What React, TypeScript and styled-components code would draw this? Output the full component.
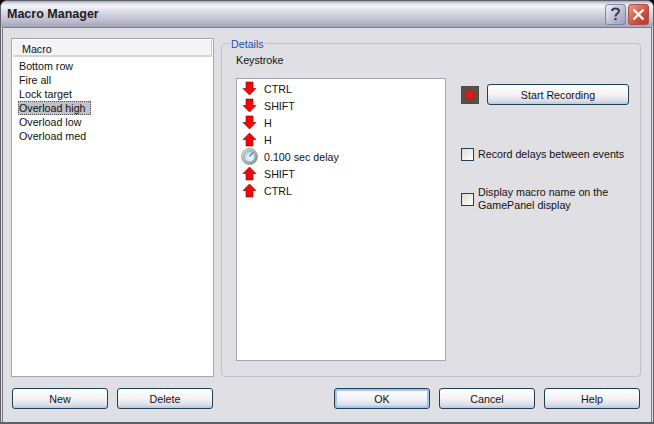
import { FC } from 'react';
import styled, { createGlobalStyle } from 'styled-components';

const GlobalStyle = createGlobalStyle`
  html, body {
    margin: 0;
    padding: 0;
    background: #000;
  }
  body {
    font-family: "Liberation Sans", Arial, sans-serif;
    font-size: 10.7px;
    color: #111;
  }
`;

const Window = styled.div`
  width: 654px;
  height: 424px;
  box-sizing: border-box;
  display: flex;
  flex-direction: column;
  overflow: hidden;
  background: #e0dfe3;
  border-radius: 7px 7px 0 0;
  border: 1px solid #5f5f68;
  border-bottom-width: 2px;
`;

const TitleBar = styled.div`
  height: 26px;
  flex: none;
  display: flex;
  align-items: center;
  padding: 0 4px 0 6px;
  background: linear-gradient(
    #a9a9b8 0,
    #e6e6ee 3px,
    #f4f4f8 5px,
    #d6d6e2 12px,
    #bcbccc 20px,
    #a8a8bc 25px
  );
`;

const Title = styled.div`
  flex: 1;
  font-size: 12.5px;
  font-weight: bold;
  color: #1c1c24;
`;

const CaptionButton = styled.div<{ $close?: boolean }>`
  width: 21px;
  height: 21px;
  margin-left: 2px;
  box-sizing: border-box;
  display: flex;
  align-items: center;
  justify-content: center;
  border: 1px solid ${({ $close }) => ($close ? '#a85050' : '#8088a8')};
  border-radius: 3px;
  background: ${({ $close }) =>
    $close
      ? 'linear-gradient(135deg, #e89a88, #d0503c 60%, #b83828)'
      : 'linear-gradient(135deg, #eef0f8, #b8bcd4 60%, #9ca0c0)'};
`;

const Client = styled.div`
  flex: 1;
  display: flex;
  flex-direction: column;
  margin: 0 1px;
  border: 1px solid #7c7c88;
  border-bottom: none;
  padding: 10px 10px 10px 8px;
`;

const TopRow = styled.div`
  display: flex;
  gap: 7px;
  height: 339px;
`;

const ListPanel = styled.div`
  width: 203px;
  flex: none;
  box-sizing: border-box;
  border: 1px solid #a5a5b0;
  background: #fff;
  padding: 1px;
`;

const ColumnHeader = styled.div`
  height: 17px;
  box-sizing: border-box;
  padding: 3px 0 0 9px;
  margin-bottom: 2px;
  background: #f4f4f4;
  border-right: 1px solid #c4c4cc;
  border-bottom: 2px solid #d4d4dc;
  line-height: 13px;
`;

const MacroItems = styled.div`
  display: flex;
  flex-direction: column;
  align-items: flex-start;
  padding-left: 5px;
`;

const MacroItem = styled.div<{ $selected?: boolean }>`
  height: 14px;
  line-height: 14px;
  padding: 0 ${({ $selected }) => ($selected ? 5 : 1)}px 0 1px;
  box-sizing: border-box;
  background: ${({ $selected }) => ($selected ? '#c0c0c8' : 'transparent')};
  outline: ${({ $selected }) => ($selected ? '1px dotted #555' : 'none')};
  outline-offset: -1px;
`;

const DetailsGroup = styled.div`
  position: relative;
  width: 420px;
  flex: none;
  height: 334px;
  margin-top: 5px;
  box-sizing: border-box;
  border: 1px solid #c0c0c8;
  border-radius: 4px;
  padding: 9px 11px 15px 14px;
  display: flex;
  gap: 15px;
`;

const Legend = styled.div`
  position: absolute;
  top: -6px;
  left: 8px;
  padding: 0 1px;
  background: #e0dfe3;
  color: #2450a8;
  line-height: 13px;
`;

const KeystrokeColumn = styled.div`
  width: 210px;
  flex: none;
  display: flex;
  flex-direction: column;
`;

const FieldLabel = styled.div`
  height: 25px;
  line-height: 14px;
`;

const KeystrokeList = styled.div`
  flex: 1;
  box-sizing: border-box;
  border: 1px solid #a5a5b0;
  background: #fff;
  padding: 1px 0 0 4px;
`;

const KeystrokeRow = styled.div`
  height: 17px;
  display: flex;
  align-items: center;
  gap: 6px;
`;

const IconSlot = styled.div`
  width: 17px;
  height: 17px;
  flex: none;
  display: flex;
  align-items: center;
  justify-content: center;
`;

const SideColumn = styled.div`
  flex: 1;
  display: flex;
  flex-direction: column;
  padding-top: 31px;
`;

const RecordRow = styled.div`
  display: flex;
  align-items: center;
  gap: 8px;
  margin-bottom: 43px;
`;

const RecordLamp = styled.div`
  width: 18px;
  height: 18px;
  background: radial-gradient(circle, #f81410 0, #d81c14 3px, #84382c 5px, #545450 8px);
  border: 1px solid #4a4a48;
  box-sizing: border-box;
`;

const PushButton = styled.button<{ $width?: number; $isDefault?: boolean }>`
  width: ${({ $width }) => $width ?? 96}px;
  height: 21px;
  padding: 0;
  font: inherit;
  color: #111;
  border: 1px solid #1c4058;
  border-radius: 3px;
  background: linear-gradient(#fff 0, #f4f4f8 50%, #dcdce8 85%, #c4c4d8 100%);
  box-shadow: ${({ $isDefault }) =>
    $isDefault ? 'inset 0 0 0 2px #a8c4ec' : 'none'};
`;

const CheckRow = styled.div`
  display: flex;
  align-items: center;
  gap: 4px;
  line-height: 13px;
  margin-bottom: 25px;
`;

const CheckBox = styled.div`
  width: 13px;
  height: 13px;
  flex: none;
  box-sizing: border-box;
  border: 1px solid #1c4058;
  background: linear-gradient(135deg, #dcdcd4, #fff);
`;

const ButtonRow = styled.div`
  display: flex;
  gap: 9px;
  margin-top: 11px;
  padding-left: 1px;
`;

const Spacer = styled.div`
  width: 103px;
`;

const ArrowIcon: FC<{ up?: boolean }> = ({ up }) => (
  <svg width="15" height="15" viewBox="0 0 15 15">
    <path
      d={up ? 'M7.5 1 L14 7.5 L11 7.5 L11 14 L4 14 L4 7.5 L1 7.5 Z' : 'M4 1 L11 1 L11 7.5 L14 7.5 L7.5 14 L1 7.5 L4 7.5 Z'}
      fill="#f00808"
      stroke="#8a0000"
      strokeWidth="0.6"
    />
  </svg>
);

const ClockIcon: FC = () => (
  <svg width="17" height="17" viewBox="0 0 17 17">
    <defs>
      <linearGradient id="clockRing" x1="0" y1="0" x2="1" y2="1">
        <stop offset="0" stopColor="#e8e8e4" />
        <stop offset="1" stopColor="#88887f" />
      </linearGradient>
      <radialGradient id="clockDial" cx="0.6" cy="0.65" r="0.7">
        <stop offset="0" stopColor="#f4fbff" />
        <stop offset="1" stopColor="#a8d0e8" />
      </radialGradient>
    </defs>
    <circle cx="8.5" cy="8.5" r="8" fill="url(#clockRing)" stroke="#808078" strokeWidth="0.6" />
    <circle cx="8.5" cy="8.5" r="5.6" fill="url(#clockDial)" stroke="#6f98b4" strokeWidth="0.7" />
    <path d="M8.5 8.5 L12 4.5" stroke="#3a5a78" strokeWidth="1.1" />
  </svg>
);

const macros = ['Bottom row', 'Fire all', 'Lock target', 'Overload high', 'Overload low', 'Overload med'];

const keystrokes = [
  { kind: 'down', text: 'CTRL' },
  { kind: 'down', text: 'SHIFT' },
  { kind: 'down', text: 'H' },
  { kind: 'up', text: 'H' },
  { kind: 'delay', text: '0.100 sec delay' },
  { kind: 'up', text: 'SHIFT' },
  { kind: 'up', text: 'CTRL' },
];

const App: FC = () => (
  <Window>
    <GlobalStyle />
    <TitleBar>
      <Title>Macro Manager</Title>
      <CaptionButton>
        <svg width="11" height="14" viewBox="0 0 11 14">
          <path d="M2 4 C2 0.5 9 0.5 9 4 C9 6.5 5.5 6.5 5.5 9.5" fill="none" stroke="#3a3a50" strokeWidth="2" />
          <rect x="4.4" y="11" width="2.2" height="2.2" fill="#3a3a50" />
        </svg>
      </CaptionButton>
      <CaptionButton $close>
        <svg width="13" height="13" viewBox="0 0 13 13">
          <path d="M1.5 1.5 L11.5 11.5 M11.5 1.5 L1.5 11.5" stroke="#fff" strokeWidth="2.4" />
        </svg>
      </CaptionButton>
    </TitleBar>
    <Client>
      <TopRow>
        <ListPanel>
          <ColumnHeader>Macro</ColumnHeader>
          <MacroItems>
            {macros.map((name) => (
              <MacroItem key={name} $selected={name === 'Overload high'}>
                {name}
              </MacroItem>
            ))}
          </MacroItems>
        </ListPanel>
        <DetailsGroup>
          <Legend>Details</Legend>
          <KeystrokeColumn>
            <FieldLabel>Keystroke</FieldLabel>
            <KeystrokeList>
              {keystrokes.map((row, i) => (
                <KeystrokeRow key={i}>
                  <IconSlot>
                    {row.kind === 'delay' ? <ClockIcon /> : <ArrowIcon up={row.kind === 'up'} />}
                  </IconSlot>
                  {row.text}
                </KeystrokeRow>
              ))}
            </KeystrokeList>
          </KeystrokeColumn>
          <SideColumn>
            <RecordRow>
              <RecordLamp />
              <PushButton $width={142}>Start Recording</PushButton>
            </RecordRow>
            <CheckRow>
              <CheckBox />
              Record delays between events
            </CheckRow>
            <CheckRow>
              <CheckBox />
              <div>
                Display macro name on the
                <br />
                GamePanel display
              </div>
            </CheckRow>
          </SideColumn>
        </DetailsGroup>
      </TopRow>
      <ButtonRow>
        <PushButton>New</PushButton>
        <PushButton>Delete</PushButton>
        <Spacer />
        <PushButton $isDefault>OK</PushButton>
        <PushButton>Cancel</PushButton>
        <PushButton>Help</PushButton>
      </ButtonRow>
    </Client>
  </Window>
);

export default App;
